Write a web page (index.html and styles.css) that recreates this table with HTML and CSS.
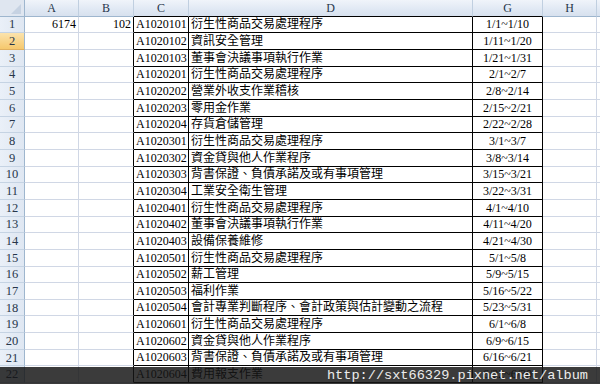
FILE: index.html
```html
<!DOCTYPE html>
<html lang="zh-Hant">
<head>
<meta charset="utf-8">
<link rel="stylesheet" href="styles.css">
</head>
<body>
<div class="sheet">
  <div class="grid">
    <div class="corner"><svg width="24" height="16" viewBox="0 0 24 16"><polygon points="21,4 21,14 11,14" fill="#c6d2e2"/></svg></div>
    <div class="ch">A</div><div class="ch">B</div><div class="ch bk">C</div><div class="ch bk">D</div><div class="ch bk">G</div><div class="ch">H</div><div class="ch"></div>

    <div class="rh">1</div><div class="c num">6174</div><div class="c num b">102</div><div class="c k">A1020101</div><div class="c k">衍生性商品交易處理程序</div><div class="c k ctr">1/1~1/10</div><div class="c"></div><div class="c"></div>
    <div class="rh sel">2</div><div class="c"></div><div class="c b"></div><div class="c k">A1020102</div><div class="c k">資訊安全管理</div><div class="c k ctr">1/11~1/20</div><div class="c"></div><div class="c"></div>
    <div class="rh">3</div><div class="c"></div><div class="c b"></div><div class="c k">A1020103</div><div class="c k">董事會決議事項執行作業</div><div class="c k ctr">1/21~1/31</div><div class="c"></div><div class="c"></div>
    <div class="rh">4</div><div class="c"></div><div class="c b"></div><div class="c k">A1020201</div><div class="c k">衍生性商品交易處理程序</div><div class="c k ctr">2/1~2/7</div><div class="c"></div><div class="c"></div>
    <div class="rh">5</div><div class="c"></div><div class="c b"></div><div class="c k">A1020202</div><div class="c k">營業外收支作業稽核</div><div class="c k ctr">2/8~2/14</div><div class="c"></div><div class="c"></div>
    <div class="rh">6</div><div class="c"></div><div class="c b"></div><div class="c k">A1020203</div><div class="c k">零用金作業</div><div class="c k ctr">2/15~2/21</div><div class="c"></div><div class="c"></div>
    <div class="rh">7</div><div class="c"></div><div class="c b"></div><div class="c k">A1020204</div><div class="c k">存貨倉儲管理</div><div class="c k ctr">2/22~2/28</div><div class="c"></div><div class="c"></div>
    <div class="rh">8</div><div class="c"></div><div class="c b"></div><div class="c k">A1020301</div><div class="c k">衍生性商品交易處理程序</div><div class="c k ctr">3/1~3/7</div><div class="c"></div><div class="c"></div>
    <div class="rh">9</div><div class="c"></div><div class="c b"></div><div class="c k">A1020302</div><div class="c k">資金貸與他人作業程序</div><div class="c k ctr">3/8~3/14</div><div class="c"></div><div class="c"></div>
    <div class="rh">10</div><div class="c"></div><div class="c b"></div><div class="c k">A1020303</div><div class="c k">背書保證、負債承諾及或有事項管理</div><div class="c k ctr">3/15~3/21</div><div class="c"></div><div class="c"></div>
    <div class="rh">11</div><div class="c"></div><div class="c b"></div><div class="c k">A1020304</div><div class="c k">工業安全衛生管理</div><div class="c k ctr">3/22~3/31</div><div class="c"></div><div class="c"></div>
    <div class="rh">12</div><div class="c"></div><div class="c b"></div><div class="c k">A1020401</div><div class="c k">衍生性商品交易處理程序</div><div class="c k ctr">4/1~4/10</div><div class="c"></div><div class="c"></div>
    <div class="rh">13</div><div class="c"></div><div class="c b"></div><div class="c k">A1020402</div><div class="c k">董事會決議事項執行作業</div><div class="c k ctr">4/11~4/20</div><div class="c"></div><div class="c"></div>
    <div class="rh">14</div><div class="c"></div><div class="c b"></div><div class="c k">A1020403</div><div class="c k">設備保養維修</div><div class="c k ctr">4/21~4/30</div><div class="c"></div><div class="c"></div>
    <div class="rh">15</div><div class="c"></div><div class="c b"></div><div class="c k">A1020501</div><div class="c k">衍生性商品交易處理程序</div><div class="c k ctr">5/1~5/8</div><div class="c"></div><div class="c"></div>
    <div class="rh">16</div><div class="c"></div><div class="c b"></div><div class="c k">A1020502</div><div class="c k">薪工管理</div><div class="c k ctr">5/9~5/15</div><div class="c"></div><div class="c"></div>
    <div class="rh">17</div><div class="c"></div><div class="c b"></div><div class="c k">A1020503</div><div class="c k">福利作業</div><div class="c k ctr">5/16~5/22</div><div class="c"></div><div class="c"></div>
    <div class="rh">18</div><div class="c"></div><div class="c b"></div><div class="c k">A1020504</div><div class="c k">會計專業判斷程序、會計政策與估計變動之流程</div><div class="c k ctr">5/23~5/31</div><div class="c"></div><div class="c"></div>
    <div class="rh">19</div><div class="c"></div><div class="c b"></div><div class="c k">A1020601</div><div class="c k">衍生性商品交易處理程序</div><div class="c k ctr">6/1~6/8</div><div class="c"></div><div class="c"></div>
    <div class="rh">20</div><div class="c"></div><div class="c b"></div><div class="c k">A1020602</div><div class="c k">資金貸與他人作業程序</div><div class="c k ctr">6/9~6/15</div><div class="c"></div><div class="c"></div>
    <div class="rh">21</div><div class="c"></div><div class="c b"></div><div class="c k">A1020603</div><div class="c k">背書保證、負債承諾及或有事項管理</div><div class="c k ctr">6/16~6/21</div><div class="c"></div><div class="c"></div>
    <div class="rh">22</div><div class="c"></div><div class="c b"></div><div class="c k">A1020604</div><div class="c k">費用報支作業</div><div class="c k ctr">6/22~6/30</div><div class="c"></div><div class="c"></div>
  </div>
  <div class="watermark">http://sxt66329.pixnet.net/album</div>
</div>
</body>
</html>
```
FILE: styles.css
```css
html, body {
  margin: 0;
  padding: 0;
  background: #ffffff;
  overflow: hidden;
}
.sheet {
  position: relative;
  width: 600px;
  height: 384px;
  overflow: hidden;
}
.grid {
  display: grid;
  grid-template-columns: 25px 54px 55px 55px 284px 70px 54px 20px;
  grid-template-rows: repeat(24, 16.667px);
  font-family: "Liberation Serif", "Noto Sans CJK TC", serif;
  font-size: 12px;
  color: #000;
}
.grid > div {
  box-sizing: border-box;
  border-right: 1px solid #d0d7e5;
  border-bottom: 1px solid #d0d7e5;
  white-space: nowrap;
  overflow: hidden;
  display: flex;
  align-items: flex-end;
  line-height: 14px;
  padding: 0 2px 1px 2px;
}
.grid > .corner {
  background: #dfe6f0;
  border-right: 1px solid #9eb6ce;
  border-bottom: 1px solid #9eb6ce;
  padding: 0;
  align-items: stretch;
}
.corner svg { display: block; }
.grid > .ch {
  background: linear-gradient(#f0f4fa, #e1e9f4 55%, #d7e1ee);
  border-right: 1px solid #c0cfe0;
  border-bottom: 1px solid #9eb6ce;
  justify-content: center;
  align-items: center;
  color: #27364a;
  font-size: 12px;
  padding: 0;
}
.grid > .ch.bk { border-bottom-color: #000; }
.grid > .rh {
  background: linear-gradient(90deg, #eaf0f8, #dfe7f2);
  border-right: 1px solid #9eb6ce;
  border-bottom: 1px solid #c5d3e3;
  justify-content: center;
  align-items: center;
  color: #27364a;
  font-size: 12.5px;
  padding: 0;
}
.grid > .rh.sel {
  background: linear-gradient(#fbe3ad, #f6c86d);
  border-bottom-color: #e0b060;
}
.grid > .b { border-right-color: #000; }
.grid > .k {
  border-right-color: #000;
  border-bottom-color: #000;
}
.num { justify-content: flex-end; }
.ctr { justify-content: center; }
.watermark {
  position: absolute;
  left: 0;
  top: 367px;
  width: 600px;
  height: 17px;
  box-sizing: border-box;
  background: rgba(22, 22, 22, 0.84);
  color: #ececec;
  font-family: "Liberation Mono", monospace;
  font-size: 13.6px;
  line-height: 17px;
  text-align: right;
  padding-right: 12px;
}
```
